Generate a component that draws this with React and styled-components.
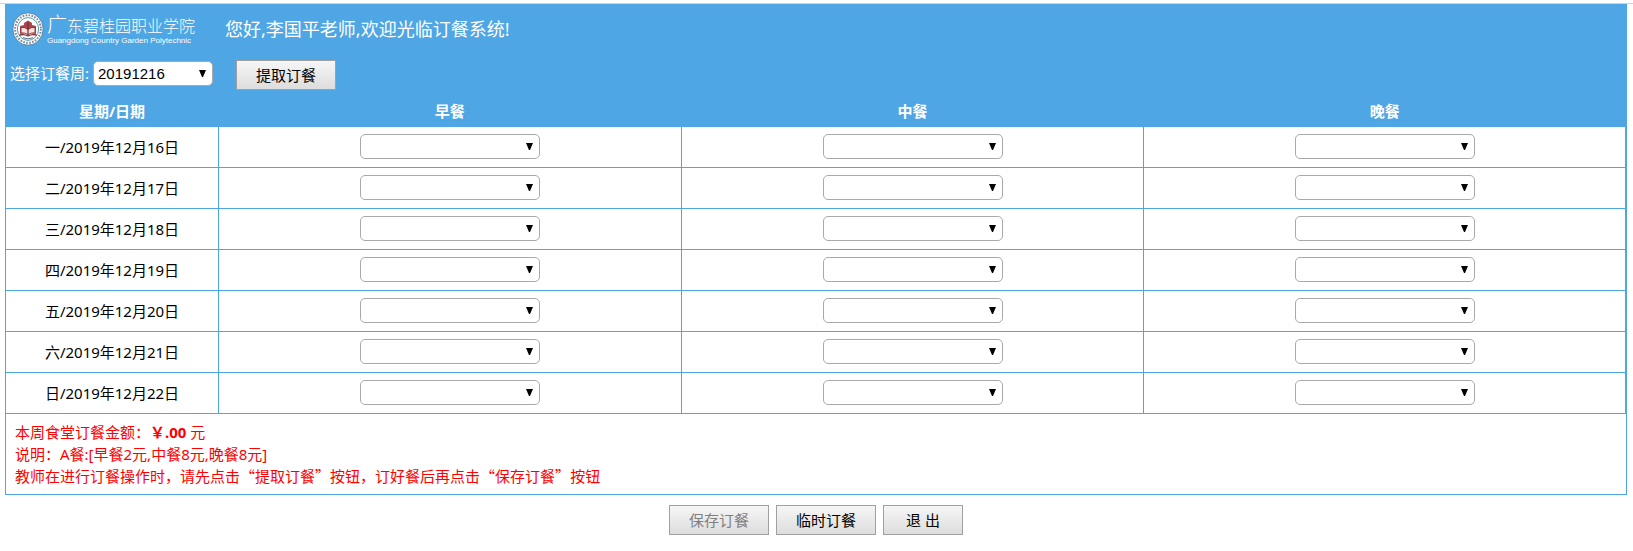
import React, {useState} from 'react';
import styled, {createGlobalStyle} from 'styled-components';

const blue = '#4fa6e4';
const arrow = `url("data:image/svg+xml,%3Csvg xmlns='http://www.w3.org/2000/svg' width='7' height='7'%3E%3Cpath d='M0 0h7L4 7H3z'/%3E%3C/svg%3E")`;

const weeks = ['20191216'];
const meals = ['早餐', '中餐', '晚餐'];
const days = [
    '一/2019年12月16日',
    '二/2019年12月17日',
    '三/2019年12月18日',
    '四/2019年12月19日',
    '五/2019年12月20日',
    '六/2019年12月21日',
    '日/2019年12月22日',
];

const GlobalStyle = createGlobalStyle`
    * {
        box-sizing: border-box;
    }
    body {
        margin: 0;
        padding-top: 3px;
        background: white;
        color: black;
        font-family: 'Noto Sans', 'Noto Sans CJK SC', sans-serif;
        font-size: 15px;
    }
`;

const Page = styled.form`
    border-top: 1px solid #d3d3d3;
    padding: 0 6px 16px 5px;
`;

const Panel = styled.main`
    border: 1px solid ${blue};
    border-top: 0;
`;

const Header = styled.header`
    background: ${blue};
    color: white;
`;

const Brand = styled.div`
    display: flex;
    align-items: center;
    height: 50px;
    padding-left: 6px;
`;

const Names = styled.div`
    display: flex;
    flex-direction: column;
    width: 178px;
    margin-left: 3px;
    white-space: nowrap;
`;

const SchoolName = styled.span`
    display: block;
    font-family: 'Noto Sans CJK SC', sans-serif;
    font-size: 16px;
    font-weight: 300;
    line-height: 22px;
    &::first-letter {
        font-size: 20px;
    }
`;

const EnglishName = styled.span`
    font-family: 'Liberation Sans', sans-serif;
    font-size: 8px;
    line-height: 10px;
`;

const Greeting = styled.h1`
    margin: 0;
    font-size: 18px;
    font-weight: 400;
    line-height: 28px;
`;

const Toolbar = styled.div`
    display: flex;
    align-items: flex-start;
    height: 42px;
    padding: 6px 0 0 4px;
`;

const WeekLabel = styled.label`
    margin-right: 4px;
    line-height: 26px;
`;

const Select = styled.select`
    display: block;
    appearance: none;
    width: ${props => props.$wide ? '180px' : '120px'};
    height: 25px;
    margin: ${props => props.$wide ? '0 auto' : '1px 23px 0 0'};
    padding: 0 16px 0 4px;
    border: 1px solid #a9a9a9;
    border-radius: 5px;
    background: white ${arrow} no-repeat right 6px top 8px;
    color: black;
    font-family: 'Liberation Sans', sans-serif;
    font-size: 15px;
`;

const Button = styled.button`
    width: ${props => props.$narrow ? '80px' : '100px'};
    height: 30px;
    padding: 0;
    border: 1px solid #a0a0a0;
    background: linear-gradient(#f6f6f6, #dddddd);
    color: black;
    font-family: inherit;
    font-size: 15px;
    line-height: 24px;
    &:disabled {
        color: #808080;
    }
`;

const Table = styled.table`
    width: 100%;
    table-layout: fixed;
    border-collapse: separate;
    border-spacing: 0;
    text-align: center;
`;

const HeadCell = styled.th`
    width: ${props => props.$width};
    height: 31px;
    padding: 0 0 2px;
    border-right: 1px solid ${blue};
    background: ${blue};
    color: white;
    font-weight: 700;
    line-height: 22px;
`;

const Cell = styled.td`
    height: 41px;
    padding: 0 0 1px;
    border-right: 1px solid ${blue};
    border-bottom: 1px solid ${blue};
    font-weight: 400;
    line-height: 22px;
`;

const Notes = styled.section`
    padding: 7px 9px;
    color: red;
    line-height: 22px;
    p {
        margin: 0;
        height: 22px;
    }
`;

/* full-width quotation marks */
const Quote = styled.q`
    quotes: '“' '”';
    &::before, &::after {
        font-family: 'Noto Sans CJK SC', sans-serif;
    }
`;

const Actions = styled.footer`
    display: flex;
    justify-content: center;
    gap: 7px;
    padding-top: 10px;
`;

const Crest = () => (
    <svg width="32" height="34" viewBox="0 0 32 34" aria-hidden="true">
        <ellipse cx="16" cy="17" rx="15.2" ry="16.2" fill="#fff" stroke="#376f9c" strokeWidth="0.8" />
        <ellipse cx="16" cy="17" rx="12.9" ry="13.8" fill="none" stroke="#7d8a96" strokeWidth="2" strokeDasharray="1.7 1.3" />
        <ellipse cx="16" cy="17" rx="10.6" ry="11.4" fill="#fff" stroke="#4c8f9d" strokeWidth="0.9" />
        <path d="M8 14l4-1v-2l4-2.5 4 2.5v2l4 1v8l-8-1.5L8 22z" fill="#a8474b" />
        <path d="M9 15.5q4-.6 7 2 3-2.6 7-2v5.5q-4-.6-7 1.6-3-2.2-7-1.6z" fill="#f5e3e1" stroke="#8d2b31" strokeWidth="0.9" />
        <path d="M16 10v12.5M7.5 23q5-1.2 8.5 1 3.5-2.2 8.5-1" fill="none" stroke="#812a32" strokeWidth="1.3" />
        <path d="M11 25.7q5 2.3 10 0" fill="none" stroke="#556e85" strokeWidth="1" />
    </svg>
);

const App = () => {
    const [week, setWeek] = useState(weeks[0]);
    return (
        <Page onSubmit={e => e.preventDefault()}>
            <GlobalStyle />
            <Panel>
                <Header>
                    <Brand>
                        <Crest />
                        <Names>
                            <SchoolName>广东碧桂园职业学院</SchoolName>
                            <EnglishName>Guangdong Country Garden Polytechnic</EnglishName>
                        </Names>
                        <Greeting>您好,李国平老师,欢迎光临订餐系统!</Greeting>
                    </Brand>
                    <Toolbar>
                        <WeekLabel htmlFor="week">选择订餐周:</WeekLabel>
                        <Select id="week" value={week} onChange={e => setWeek(e.target.value)}>
                            {weeks.map(item => <option key={item}>{item}</option>)}
                        </Select>
                        <Button type="button">提取订餐</Button>
                    </Toolbar>
                </Header>
                <Table>
                    <thead>
                        <tr>
                            <HeadCell scope="col" $width="13.15%">星期/日期</HeadCell>
                            {meals.map((meal, index) => (
                                <HeadCell scope="col" key={meal} $width={index < 2 ? '28.56%' : 'auto'}>{meal}</HeadCell>
                            ))}
                        </tr>
                    </thead>
                    <tbody>
                        {days.map(day => (
                            <tr key={day}>
                                <Cell as="th" scope="row">{day}</Cell>
                                {meals.map(meal => (
                                    <Cell key={meal}>
                                        <Select $wide aria-label={`${day} ${meal}`}>
                                            <option></option>
                                        </Select>
                                    </Cell>
                                ))}
                            </tr>
                        ))}
                    </tbody>
                </Table>
                <Notes>
                    <p>本周食堂订餐金额：<b>￥.00</b> 元</p>
                    <p>说明：A餐:[早餐2元,中餐8元,晚餐8元]</p>
                    <p>教师在进行订餐操作时，请先点击<Quote>提取订餐</Quote>按钮，订好餐后再点击<Quote>保存订餐</Quote>按钮</p>
                </Notes>
            </Panel>
            <Actions>
                <Button type="submit" disabled>保存订餐</Button>
                <Button type="button">临时订餐</Button>
                <Button type="button" $narrow>退 出</Button>
            </Actions>
        </Page>
    );
};

export default App;
